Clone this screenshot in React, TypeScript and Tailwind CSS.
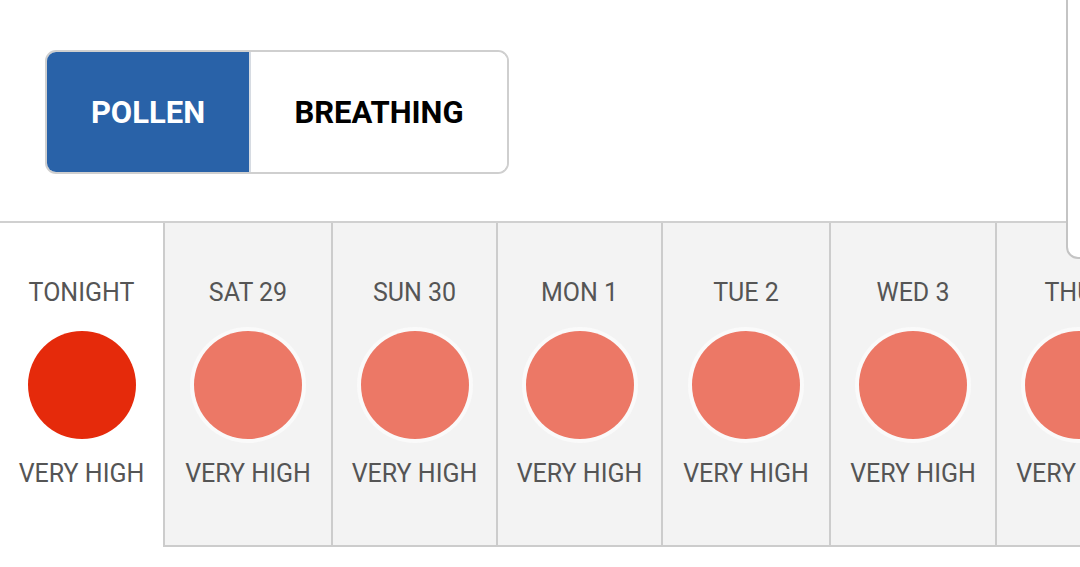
import React from "react";

const days = [
  { label: "SAT 29", w: "w-[168px]" },
  { label: "SUN 30", w: "w-[165px]" },
  { label: "MON 1", w: "w-[165px]" },
  { label: "TUE 2", w: "w-[168px]" },
  { label: "WED 3", w: "w-[166px]" },
  { label: "THU 4", w: "w-[166px]" },
];

function DayCell({ label, level, today }: { label: string; level: string; today?: boolean }) {
  return (
    <div className="flex flex-col items-center pt-[55px]">
      <div className="text-[25px] leading-[30px] text-[#555] whitespace-nowrap">{label}</div>
      {today ? (
        <div className="mt-[23px] w-[108px] h-[108px] rounded-full bg-[#e52a0b]" />
      ) : (
        <div className="mt-[19px] w-[116px] h-[116px] rounded-full bg-[#fafafa] flex items-center justify-center">
          <div className="w-[108px] h-[108px] rounded-full bg-[#ec7866]" />
        </div>
      )}
      <div className={`${today ? "mt-[20px]" : "mt-[16px]"} text-[25px] leading-[30px] text-[#555] whitespace-nowrap`}>
        {level}
      </div>
    </div>
  );
}

export default function App() {
  return (
    <div className="relative w-[1080px] h-[567px] overflow-hidden bg-white font-['Roboto',sans-serif]">
      {/* toggle */}
      <div className="h-[223px] border-b-2 border-[#d0d0d0] pl-[45px] pt-[50px]">
        <div className="flex w-[464px] h-[124px] rounded-[11px] border-2 border-[#cfcfcf] overflow-hidden">
          <div className="w-[202px] bg-[#2962a8] flex items-center justify-center text-white font-bold text-[31px] pt-[2px]">
            POLLEN
          </div>
          <div className="flex-1 border-l-2 border-[#d6dbe2] bg-white flex items-center justify-center text-black font-bold text-[31px] pt-[2px]">
            BREATHING
          </div>
        </div>
      </div>

      {/* forecast row */}
      <div className="flex">
        <div className="w-[163px] shrink-0 h-[324px]">
          <DayCell label="TONIGHT" level="VERY HIGH" today />
        </div>
        {days.map((d) => (
          <div
            key={d.label}
            className={`${d.w} shrink-0 h-[324px] bg-[#f3f3f3] border-l-2 border-b-2 border-[#cccccc]`}
          >
            <DayCell label={d.label} level="VERY HIGH" />
          </div>
        ))}
      </div>

      {/* overlapping panel edge */}
      <div className="absolute left-[1066px] top-[-12px] w-[40px] h-[271px] bg-white border-2 border-[#c4c4c4] rounded-bl-[12px]" />
    </div>
  );
}
